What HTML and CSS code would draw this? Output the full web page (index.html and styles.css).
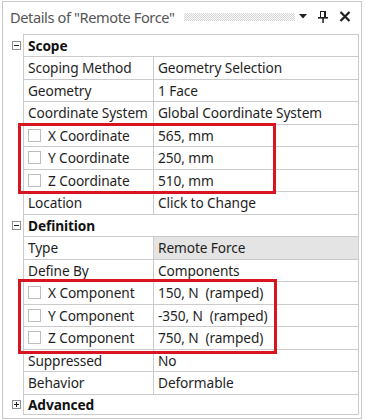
FILE: index.html
```html
<!doctype html>
<html>
<head>
<meta charset="utf-8">
<title>Details of "Remote Force"</title>
<link rel="stylesheet" href="styles.css">
</head>
<body>
<div class="panel">
	<div class="titlebar">
		<span class="title">Details of "Remote Force"</span>
		<span class="grip"></span>
		<svg class="tb-icon drop" width="9" height="5" viewBox="0 0 9 5"><polygon points="0,0 8,0 4,4.5" fill="#1e1e1e"/></svg>
		<svg class="tb-icon pin" width="11" height="12" viewBox="0 0 11 12">
			<rect x="2.5" y="0.5" width="5" height="6" fill="none" stroke="#1e1e1e"/>
			<rect x="6" y="0" width="2" height="7" fill="#1e1e1e"/>
			<rect x="0" y="6" width="10" height="1.6" fill="#1e1e1e"/>
			<rect x="4.3" y="7" width="1.5" height="5" fill="#1e1e1e"/>
		</svg>
		<svg class="tb-icon close" width="12" height="11" viewBox="0 0 12 11"><path d="M1.5 1 L10.5 10 M10.5 1 L1.5 10" stroke="#1e1e1e" stroke-width="2.2"/></svg>
	</div>

	<div class="grid">
		<div class="row head first">
			<span class="gutter"><span class="toggle minus"></span></span>
			<div class="cells"><span class="cell wide">Scope</span></div>
		</div>
		<div class="row">
			<span class="gutter"></span>
			<div class="cells"><span class="cell label">Scoping Method</span><span class="cell">Geometry Selection</span></div>
		</div>
		<div class="row">
			<span class="gutter"></span>
			<div class="cells"><span class="cell label">Geometry</span><span class="cell">1 Face</span></div>
		</div>
		<div class="row">
			<span class="gutter"></span>
			<div class="cells"><span class="cell label">Coordinate System</span><span class="cell">Global Coordinate System</span></div>
		</div>
		<div class="marked one">
			<div class="row">
				<span class="gutter"></span>
				<div class="cells"><span class="cell label"><i class="check"></i>X Coordinate</span><span class="cell">565, mm</span></div>
			</div>
			<div class="row">
				<span class="gutter"></span>
				<div class="cells"><span class="cell label"><i class="check"></i>Y Coordinate</span><span class="cell">250, mm</span></div>
			</div>
			<div class="row">
				<span class="gutter"></span>
				<div class="cells"><span class="cell label"><i class="check"></i>Z Coordinate</span><span class="cell">510, mm</span></div>
			</div>
		</div>
		<div class="row">
			<span class="gutter"></span>
			<div class="cells"><span class="cell label">Location</span><span class="cell">Click to Change</span></div>
		</div>
		<div class="row head">
			<span class="gutter"><span class="toggle minus"></span></span>
			<div class="cells"><span class="cell wide">Definition</span></div>
		</div>
		<div class="row">
			<span class="gutter"></span>
			<div class="cells"><span class="cell label">Type</span><span class="cell selected">Remote Force</span></div>
		</div>
		<div class="row">
			<span class="gutter"></span>
			<div class="cells"><span class="cell label">Define By</span><span class="cell">Components</span></div>
		</div>
		<div class="marked two">
			<div class="row">
				<span class="gutter"></span>
				<div class="cells"><span class="cell label"><i class="check"></i>X Component</span><span class="cell">150, N&nbsp; (ramped)</span></div>
			</div>
			<div class="row">
				<span class="gutter"></span>
				<div class="cells"><span class="cell label"><i class="check"></i>Y Component</span><span class="cell">-350, N&nbsp; (ramped)</span></div>
			</div>
			<div class="row">
				<span class="gutter"></span>
				<div class="cells"><span class="cell label"><i class="check"></i>Z Component</span><span class="cell">750, N&nbsp; (ramped)</span></div>
			</div>
		</div>
		<div class="row">
			<span class="gutter"></span>
			<div class="cells"><span class="cell label">Suppressed</span><span class="cell">No</span></div>
		</div>
		<div class="row">
			<span class="gutter"></span>
			<div class="cells"><span class="cell label">Behavior</span><span class="cell">Deformable</span></div>
		</div>
		<div class="row head last">
			<span class="gutter"><span class="toggle plus"></span></span>
			<div class="cells"><span class="cell wide">Advanced</span></div>
		</div>
	</div>
</div>
</body>
</html>
```

FILE: styles.css
```css
body {
	margin: 0;
	background: #ffffff;
	font-family: "Noto Sans", "Open Sans", sans-serif;
	font-size: 13.7px;
	letter-spacing: -0.1px;
	color: #1f1f1f;
	overflow: hidden;
}

.panel {
	margin: 1px 0 0 2px;
	width: 360px;
	height: 418px;
	box-sizing: border-box;
	border: 1px solid #c9c9c9;
	background: #ffffff;
}

/* title bar */
.titlebar {
	height: 31.5px;
	display: flex;
	align-items: center;
	padding: 0 0 2px 7px;
	box-sizing: border-box;
}
.title {
	font-size: 14.6px;
	letter-spacing: -0.4px;
	color: #555555;
	white-space: nowrap;
}
.grip {
	width: 111px;
	height: 8px;
	margin-left: 9px;
	background: repeating-conic-gradient(#d2d2d2 0 25%, transparent 0 50%) 0 0 / 2px 2px;
}
.tb-icon {
	display: block;
}
.drop {
	margin-left: 4px;
}
.pin {
	margin-left: 10px;
}
.close {
	margin-left: 10px;
}

/* property grid */
.row {
	display: flex;
	height: 22.5px;
}
.gutter {
	width: 20px;
	flex: none;
	display: flex;
	justify-content: center;
	align-items: center;
	padding-left: 7px;
	box-sizing: border-box;
}
.cells {
	width: 336px;
	display: grid;
	grid-template-columns: 130px 1fr;
	box-sizing: border-box;
	border: 1px solid #cbcbcb;
	border-top: none;
}
.first .cells {
	border-top: 1px solid #cbcbcb;
}
.first {
	height: 23.5px;
}
.last {
	height: 20.5px;
}
.cell {
	display: flex;
	align-items: center;
	padding-left: 4px;
	white-space: nowrap;
	overflow: hidden;
}
.label {
	border-right: 1px solid #cbcbcb;
}
.wide {
	grid-column: 1 / 3;
	font-weight: bold;
	color: #111111;
}
.selected {
	background: #e4e4e4;
}

.check {
	width: 13px;
	height: 13px;
	box-sizing: border-box;
	border: 1px solid #bdbdbd;
	margin-right: 7px;
	flex: none;
}

/* expand / collapse boxes */
.toggle {
	position: relative;
	width: 9px;
	height: 9px;
	box-sizing: border-box;
	border: 1px solid #8e8e8e;
	background: #ffffff;
}
.toggle:before {
	content: "";
	position: absolute;
	left: 1px;
	top: 3px;
	width: 5px;
	height: 1px;
	background: #222222;
}
.plus:after {
	content: "";
	position: absolute;
	left: 3px;
	top: 1px;
	width: 1px;
	height: 5px;
	background: #222222;
}

/* red annotation boxes */
.marked {
	position: relative;
}
.marked:after {
	content: "";
	position: absolute;
	left: 15px;
	top: -2px;
	bottom: -2px;
	width: 258px;
	border: 3px solid #d7141f;
	box-sizing: border-box;
}
.two:after {
	top: -3px;
	bottom: -4px;
	width: 259px;
}
```
